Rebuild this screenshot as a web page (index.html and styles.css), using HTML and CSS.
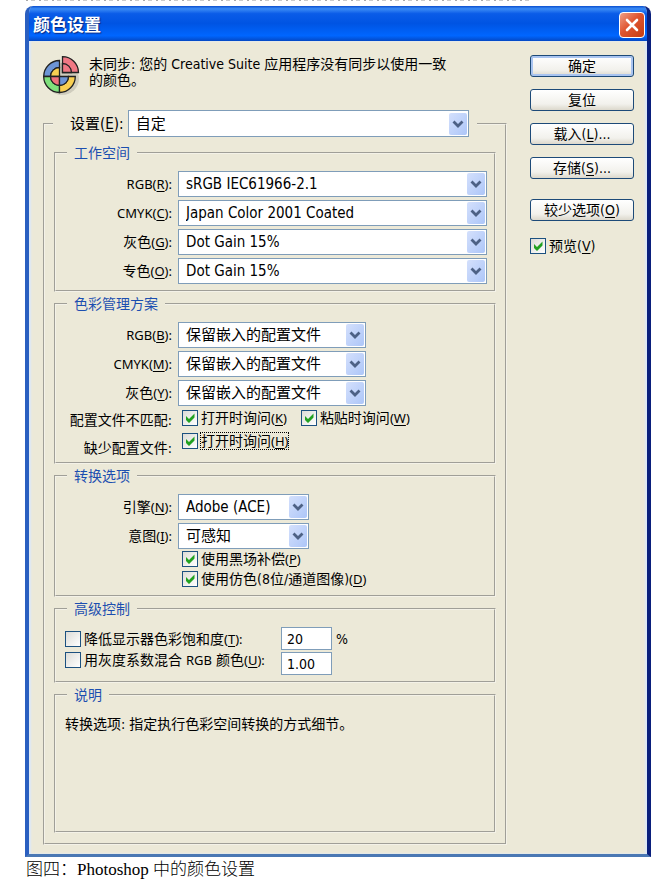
FILE: index.html
```html
<!DOCTYPE html>
<html lang="zh-CN">
<head>
    <meta charset="UTF-8">
    <meta name="viewport" content="width=device-width, initial-scale=1.0">
    <title>颜色设置</title>
    <link rel="stylesheet" href="styles.css">
</head>
<body>
    <div class="cut-line"></div>
    <div class="window">
        <div class="titlebar">
            <h1>颜色设置</h1>
            <button type="button" class="close" aria-label="关闭">
                <svg width="14" height="14" viewBox="0 0 14 14"><path d="M2 2L12 12M12 2L2 12" stroke="#fff" stroke-width="2.6" stroke-linecap="round"/></svg>
            </button>
        </div>
        <form class="dialog">
            <div class="main">
                <div class="sync">
                    <svg class="wheel" width="38" height="40" viewBox="0 0 38 40">
                        <ellipse cx="19" cy="23" rx="17" ry="16" fill="#000" opacity=".12"/>
                        <g stroke="#222" stroke-width="1.3">
                            <path d="M16.500 4.500A16 16 0 0 0 0.700 20.500H7.500A9 9 0 0 1 16.500 11.500Z" fill="#6d95d6"/>
                            <path d="M16.500 11.500A9 9 0 0 0 7.500 20.500H16.500Z" fill="#f8cf52"/>
                            <path d="M0.700 20.500A16 16 0 0 0 16.500 36.500V29.500A9 9 0 0 1 7.500 20.500Z" fill="#7fe07c"/>
                            <path d="M7.500 20.500A9 9 0 0 0 16.500 29.500V20.500Z" fill="#f0707c"/>
                            <path d="M16.500 36.500A16 16 0 0 0 32.300 20.500H25.500A9 9 0 0 1 16.500 29.500Z" fill="#f8cf52"/>
                            <path d="M16.500 29.500A9 9 0 0 0 25.500 20.500H16.500Z" fill="#6d95d6"/>
                            <path d="M19.500 0.700A16 16 0 0 1 35.500 16.500H19.500Z" fill="#f07884"/>
                            <path d="M19.500 7.500A9 9 0 0 1 28.500 16.500H19.500Z" fill="#f07884"/>
                        </g>
                    </svg>
                    <p>未同步: 您的 Creative Suite 应用程序没有同步以使用一致<br>的颜色。</p>
                </div>

                <fieldset class="settings">
                    <legend>
                        <label for="preset">设置(<u>E</u>):</label>
                        <select id="preset"><option>自定</option></select>
                    </legend>

                    <!-- 工作空间 -->
                    <fieldset class="group">
                        <legend>工作空间</legend>
                        <div class="fields">
                            <label for="ws-rgb"><span class="en">RGB(<u>R</u>):</span></label>
                            <select id="ws-rgb"><option>sRGB IEC61966-2.1</option></select>
                            <label for="ws-cmyk"><span class="en">CMYK(<u>C</u>):</span></label>
                            <select id="ws-cmyk"><option>Japan Color 2001 Coated</option></select>
                            <label for="ws-gray">灰色<span class="en">(<u>G</u>):</span></label>
                            <select id="ws-gray"><option>Dot Gain 15%</option></select>
                            <label for="ws-spot">专色<span class="en">(<u>O</u>):</span></label>
                            <select id="ws-spot"><option>Dot Gain 15%</option></select>
                        </div>
                    </fieldset>

                    <!-- 色彩管理方案 -->
                    <fieldset class="group policies">
                        <legend>色彩管理方案</legend>
                        <div class="fields medium">
                            <label for="cm-rgb"><span class="en">RGB(<u>B</u>):</span></label>
                            <select id="cm-rgb"><option>保留嵌入的配置文件</option></select>
                            <label for="cm-cmyk"><span class="en">CMYK(<u>M</u>):</span></label>
                            <select id="cm-cmyk"><option>保留嵌入的配置文件</option></select>
                            <label for="cm-gray">灰色<span class="en">(<u>Y</u>):</span></label>
                            <select id="cm-gray"><option>保留嵌入的配置文件</option></select>
                        </div>
                        <div class="asks">
                            <div class="ask-names">
                                <span>配置文件不匹配:</span>
                                <span>缺少配置文件:</span>
                            </div>
                            <div class="ask-checks">
                                <div class="check-row">
                                    <label class="check"><input type="checkbox" checked><span>打开时询问<span class="en">(<u>K</u>)</span></span></label>
                                    <label class="check"><input type="checkbox" checked><span>粘贴时询问<span class="en">(<u>W</u>)</span></span></label>
                                </div>
                                <div class="check-row">
                                    <label class="check"><input type="checkbox" checked><span class="focused">打开时询问<span class="en">(<u>H</u>)</span></span></label>
                                </div>
                            </div>
                        </div>
                    </fieldset>

                    <!-- 转换选项 -->
                    <fieldset class="group">
                        <legend>转换选项</legend>
                        <div class="fields small">
                            <label for="engine">引擎<span class="en">(<u>N</u>):</span></label>
                            <select id="engine"><option>Adobe (ACE)</option></select>
                            <label for="intent">意图<span class="en">(<u>I</u>):</span></label>
                            <select id="intent"><option>可感知</option></select>
                        </div>
                        <div class="options">
                            <label class="check"><input type="checkbox" checked><span>使用黑场补偿<span class="en">(<u>P</u>)</span></span></label>
                            <label class="check"><input type="checkbox" checked><span>使用仿色(8位/通道图像)<span class="en">(<u>D</u>)</span></span></label>
                        </div>
                    </fieldset>

                    <!-- 高级控制 -->
                    <fieldset class="group">
                        <legend>高级控制</legend>
                        <div class="advanced">
                            <div class="advanced-checks">
                                <label class="check"><input type="checkbox"><span>降低显示器色彩饱和度<span class="en">(<u>T</u>):</span></span></label>
                                <label class="check"><input type="checkbox"><span>用灰度系数混合 <span class="en">RGB</span> 颜色<span class="en">(<u>U</u>):</span></span></label>
                            </div>
                            <div class="advanced-values">
                                <div><input type="text" value="20" aria-label="降低饱和度"> <span>%</span></div>
                                <div><input type="text" value="1.00" aria-label="灰度系数"></div>
                            </div>
                        </div>
                    </fieldset>

                    <!-- 说明 -->
                    <fieldset class="group">
                        <legend>说明</legend>
                        <p class="description">转换选项: 指定执行色彩空间转换的方式细节。</p>
                    </fieldset>
                </fieldset>
            </div>

            <div class="actions">
                <button type="button" class="default">确定</button>
                <button type="button">复位</button>
                <button type="button">载入(<u>L</u>)...</button>
                <button type="button">存储(<u>S</u>)...</button>
                <button type="button" class="more">较少选项(<u>O</u>)</button>
                <label class="check"><input type="checkbox" checked><span>预览(<u>V</u>)</span></label>
            </div>
        </form>
    </div>
    <p class="caption">图四：Photoshop 中的颜色设置</p>
</body>
</html>
```
FILE: styles.css
```css
* {
    box-sizing: border-box;
}
body {
    margin: 0;
    background: #fff;
    color: #000;
    font-family: "DejaVu Sans Condensed", "Noto Sans CJK SC", sans-serif;
    font-size: 14px;
    line-height: 16px;
}
p, h1 {
    margin: 0;
}
.cut-line {
    height: 1px;
    margin: 0 140px 5px 26px;
    background: repeating-linear-gradient(90deg, #aaa 0 2px, #fff 2px 5px, #ccc 5px 9px, #fff 9px 13px);
}
.en {
    font-family: "Noto Sans", sans-serif;
    font-size: 13px;
}
u {
    text-underline-offset: 2px;
}

/* window frame */
.window {
    margin: 0 20px 0 25px;
    border: solid;
    border-width: 0 4px 3px;
    border-color: #0a1f7c #0a1f7c #4a78b4 #2a5fc0;
    border-radius: 8px 8px 0 0;
    background: #ece9d8;
    overflow: hidden;
}
.titlebar {
    display: flex;
    justify-content: space-between;
    align-items: center;
    height: 35px;
    margin: 0 -4px;
    padding: 2px 6px 0 8px;
    background: linear-gradient(#0a4fd0 0, #3c8cf5 8%, #0a5ce8 22%, #0054e3 50%, #0066ff 85%, #0448c4 100%);
}
.titlebar h1 {
    color: #fff;
    font-size: 17px;
    font-weight: bold;
    text-shadow: 1px 1px 1px #0a2a80;
}
.close {
    display: flex;
    align-items: center;
    justify-content: center;
    width: 26px;
    height: 26px;
    padding: 0;
    border: 1px solid #fff;
    border-radius: 4px;
    background: linear-gradient(135deg, #f0a088, #e05530 45%, #c43c10);
}

.dialog {
    display: flex;
    gap: 23px;
    padding: 14px 13px 9px 14px;
    box-shadow: inset 2px 0 2px #dce8f8, inset -2px 0 2px #dce8f8;
}
.main {
    flex: 1;
    min-width: 0;
}
.sync {
    display: flex;
    gap: 8px;
    height: 55px;
    padding-top: 1px;
}
.wheel {
    flex: none;
}

/* groups */
fieldset {
    min-width: 0;
    margin: 0;
    padding: 0;
    border: 2px groove #f4f2e8;
}
.settings {
    padding: 6px 9px 10px;
}
.settings > legend {
    display: flex;
    align-items: center;
    gap: 4px;
    width: calc(100% - 18px);
    margin-left: -1px;
    padding: 0 8px 0 17px;
    font-size: 15px;
}
.settings > legend select {
    flex: 1;
}
.group {
    margin-bottom: 2px;
    padding: 8px 7px 6px 9px;
}
.group:last-child {
    margin-bottom: 0;
}
.group > legend {
    margin-left: 2px;
    padding: 0 7px;
    color: #1c4fb0;
    line-height: 20px;
}
.policies {
    padding-bottom: 0;
}
.fields {
    display: grid;
    grid-template-columns: 107px 1fr;
    gap: 3px 6px;
    align-items: center;
}
.fields.medium {
    grid-template-columns: 107px 188px;
}
.fields.small {
    grid-template-columns: 107px 131px;
}
.fields label {
    text-align: right;
}

/* controls */
select {
    appearance: none;
    width: 100%;
    min-width: 0;
    height: 26px;
    padding: 0 22px 0 7px;
    border: 1px solid #7f9db9;
    border-radius: 0;
    color: #000;
    font: inherit;
    font-size: 15px;
    background: #fff url("data:image/svg+xml,%3Csvg xmlns='http://www.w3.org/2000/svg' width='18' height='22' viewBox='0 0 18 22'%3E%3Cdefs%3E%3ClinearGradient id='g' x2='1' y2='1'%3E%3Cstop stop-color='%23d4e0fc'/%3E%3Cstop offset='1' stop-color='%23adc6f8'/%3E%3C/linearGradient%3E%3C/defs%3E%3Crect width='18' height='22' rx='2' fill='url(%23g)'/%3E%3Cpath d='M4.500 8.500L9 13L13.500 8.500' fill='none' stroke='%234d6185' stroke-width='2.800'/%3E%3C/svg%3E") no-repeat right 1px center;
}
.settings > legend select {
    height: 27px;
}
input[type="text"] {
    width: 51px;
    height: 23px;
    padding: 0 5px;
    border: 1px solid #7f9db9;
    background: #fff;
    font: inherit;
    line-height: 16px;
}
input[type="checkbox"] {
    appearance: none;
    flex: none;
    width: 16px;
    height: 16px;
    margin: 0;
    border: 1px solid #1c5180;
    background: linear-gradient(135deg, #dcdcd7, #fff);
}
input[type="checkbox"]:checked {
    background: url("data:image/svg+xml,%3Csvg xmlns='http://www.w3.org/2000/svg' width='14' height='14'%3E%3Cpath d='M3 5L6 8L11.500 2.500V6.500L6 12L3 9Z' fill='%2321a121'/%3E%3C/svg%3E") no-repeat, linear-gradient(135deg, #dcdcd7, #fff);
}
.check {
    display: flex;
    align-items: center;
    gap: 3px;
    white-space: nowrap;
}
.focused {
    outline: 1px dotted #000;
}

.asks {
    display: flex;
    gap: 10px;
}
.ask-names {
    width: 107px;
    line-height: 28px;
    text-align: right;
    white-space: nowrap;
}
.ask-names span {
    display: block;
}
.check-row {
    display: flex;
    gap: 14px;
    height: 23px;
}
.options {
    padding-left: 117px;
}
.options .check {
    height: 20px;
}
.advanced {
    display: flex;
}
.advanced-checks {
    width: 216px;
    padding-top: 1px;
}
.advanced-checks .check {
    height: 21px;
}
.advanced-values {
    display: grid;
    gap: 2px;
}
.advanced-values div {
    display: flex;
    align-items: center;
    gap: 4px;
}
.description {
    min-height: 112px;
    padding-top: 3px;
}

/* buttons */
.actions {
    display: flex;
    flex-direction: column;
    gap: 12px;
    width: 104px;
}
.actions button {
    height: 22px;
    padding: 0;
    border: 1px solid #1d4a78;
    border-radius: 3px;
    background: linear-gradient(#fff, #f2f1ec 70%, #dcd8cc);
    color: #000;
    font: inherit;
    line-height: 16px;
}
.actions .default {
    box-shadow: inset 0 0 0 2px #a9c4f0;
}
.actions .more {
    margin-top: 8px;
}
.actions .check {
    margin-top: 5px;
}

.caption {
    margin: 4px 0 0 26px;
    font-family: "Liberation Serif", "Noto Sans CJK SC", serif;
    font-size: 17px;
    font-weight: 300;
    line-height: 18px;
}
```
